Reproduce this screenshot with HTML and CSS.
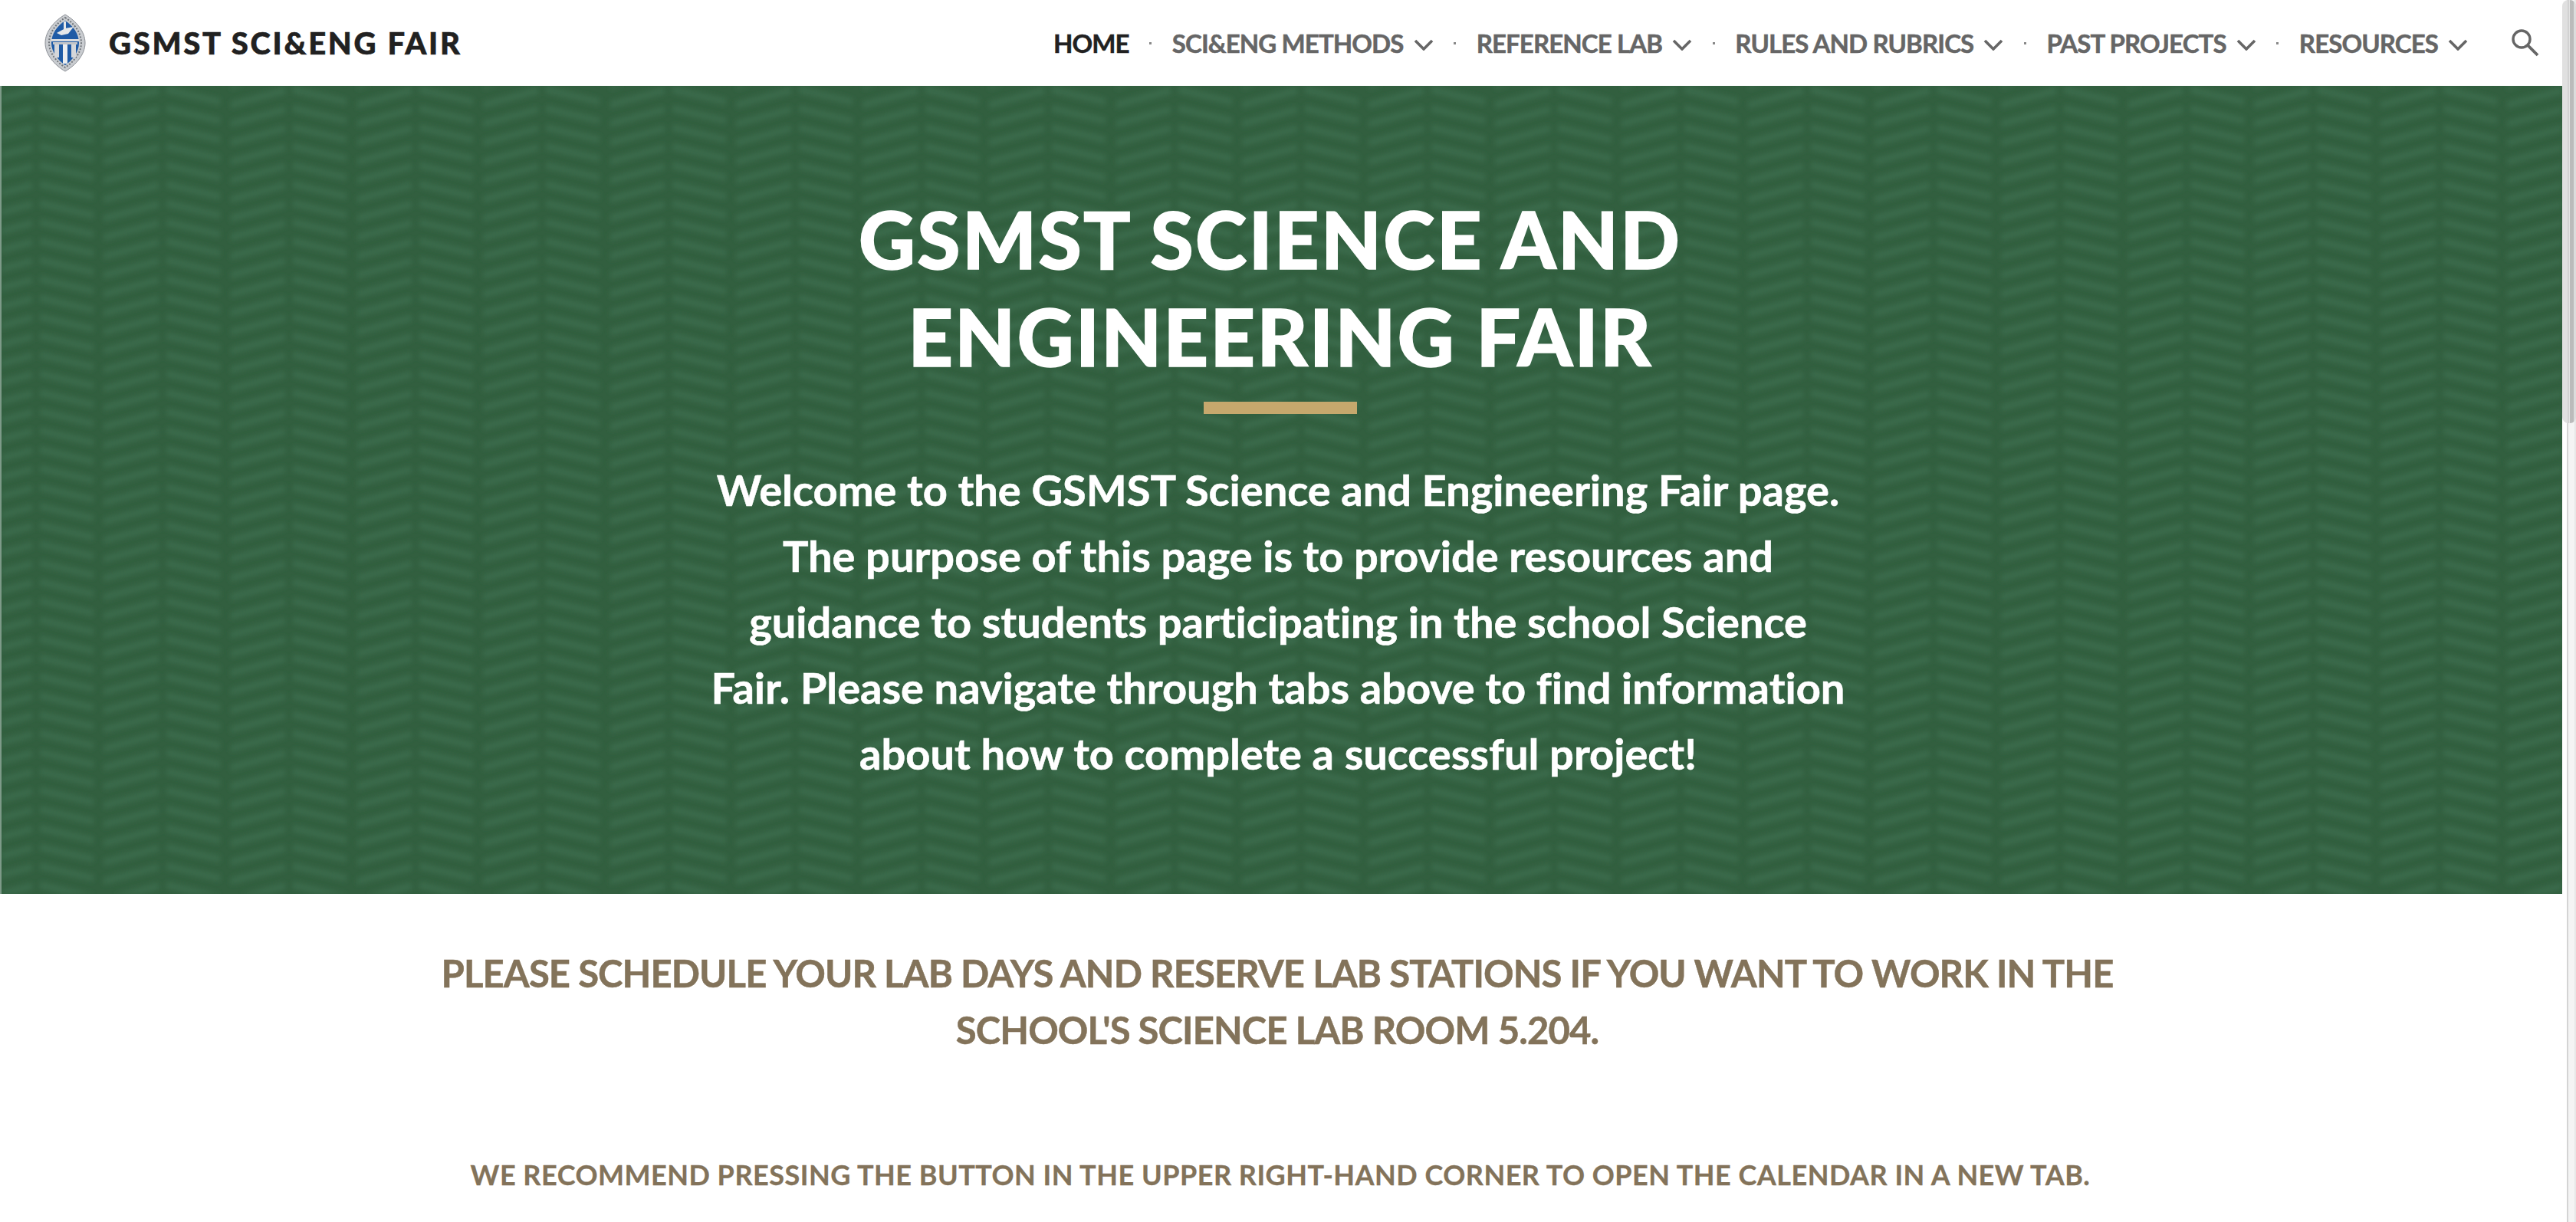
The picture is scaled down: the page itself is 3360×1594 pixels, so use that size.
FILE: index.html
```html
<!DOCTYPE html>
<html>
<head>
    <meta charset="UTF-8">
    <title>GSMST Sci&amp;Eng Fair</title>
    <link rel="stylesheet" href="styles.css">
</head>
<body>
    <div class="page">
        <div class="main">
            <!-- top bar -->
            <div class="topbar">
                <div class="brand">
                    <svg class="seal" width="54" height="76" viewBox="0 0 54 76">
                        <path d="M27 1C41 9 53 23 53 38C53 53 41 67 27 75C13 67 1 53 1 38C1 23 13 9 27 1Z" fill="#c9ccd0" stroke="#8b8f95" stroke-width="1"/>
                        <path d="M27 5C38 12 48 24 48 38C48 51 38 63 27 70C16 63 6 51 6 38C6 24 16 12 27 5Z" fill="none" stroke="#6f7479" stroke-width="2" stroke-dasharray="2 2"/>
                        <path d="M27 9C37 15 45 26 45 38C45 50 36 61 27 67C18 61 9 50 9 38C9 26 17 15 27 9Z" fill="#1f5ba6"/>
                        <rect x="9" y="33" width="36" height="3" fill="#d9dbde"/>
                        <path d="M16 25L27 19L38 17L31 26L22 28Z" fill="#e6e8ea"/>
                        <rect x="25" y="10" width="3" height="10" fill="#e6e8ea"/>
                        <rect x="13" y="39" width="6" height="18" fill="#d5d7da"/>
                        <rect x="24" y="39" width="6" height="26" fill="#eceef0"/>
                        <rect x="35" y="39" width="6" height="18" fill="#d5d7da"/>
                        <rect x="11" y="37" width="32" height="3" fill="#c2c5c9"/>
                    </svg>
                    <span class="site-name">GSMST SCI&amp;ENG FAIR</span>
                </div>
                <div class="nav">
                    <span class="nav-item active">HOME</span>
                    <span class="nav-dot"></span>
                    <span class="nav-item">SCI&amp;ENG METHODS<svg class="chev" width="26" height="16" viewBox="0 0 26 16"><path d="M2 3L13 14L24 3" fill="none" stroke="#666" stroke-width="3.6"/></svg></span>
                    <span class="nav-dot"></span>
                    <span class="nav-item">REFERENCE LAB<svg class="chev" width="26" height="16" viewBox="0 0 26 16"><path d="M2 3L13 14L24 3" fill="none" stroke="#666" stroke-width="3.6"/></svg></span>
                    <span class="nav-dot"></span>
                    <span class="nav-item">RULES AND RUBRICS<svg class="chev" width="26" height="16" viewBox="0 0 26 16"><path d="M2 3L13 14L24 3" fill="none" stroke="#666" stroke-width="3.6"/></svg></span>
                    <span class="nav-dot"></span>
                    <span class="nav-item">PAST PROJECTS<svg class="chev" width="26" height="16" viewBox="0 0 26 16"><path d="M2 3L13 14L24 3" fill="none" stroke="#666" stroke-width="3.6"/></svg></span>
                    <span class="nav-dot"></span>
                    <span class="nav-item">RESOURCES<svg class="chev" width="26" height="16" viewBox="0 0 26 16"><path d="M2 3L13 14L24 3" fill="none" stroke="#666" stroke-width="3.6"/></svg></span>
                    <svg class="search" width="38" height="38" viewBox="0 0 38 38">
                        <circle cx="14" cy="14" r="11" fill="none" stroke="#666" stroke-width="3.4"/>
                        <path d="M22 22L35 35" stroke="#666" stroke-width="3.8"/>
                    </svg>
                </div>
            </div>

            <!-- green banner -->
            <div class="hero">
                <svg class="hero-bg" width="100%" height="100%">
                    <defs>
                        <pattern id="chevrons" width="165" height="24.7" patternUnits="userSpaceOnUse" patternTransform="translate(133 0)">
                            <path d="M0 25L72 6M82 5L152 21M0 0.3L72 -18.7M82 -19.7L152 -3.7M0 49.7L72 30.7M82 29.7L152 45.7" stroke="#3a6a4b" stroke-width="9" fill="none"/>
                        </pattern>
                        <filter id="soft"><feGaussianBlur stdDeviation="3.4"/></filter>
                    </defs>
                    <rect width="100%" height="100%" fill="url(#chevrons)" filter="url(#soft)"/>
                </svg>
                <div class="hero-inner">
                    <h1 class="hero-title">GSMST SCIENCE AND&nbsp;<br>ENGINEERING FAIR</h1>
                    <div class="hero-rule"></div>
                    <p class="hero-text">Welcome to the GSMST Science and Engineering Fair page.<br>The purpose of this page is to provide resources and<br>guidance to students participating in the school Science<br>Fair. Please navigate through tabs above to find information<br>about how to complete a successful project!</p>
                </div>
            </div>

            <!-- notes under banner -->
            <div class="notes">
                <h2 class="note-big">PLEASE SCHEDULE YOUR LAB DAYS AND RESERVE LAB STATIONS IF YOU WANT TO WORK IN THE<br>SCHOOL'S SCIENCE LAB ROOM 5.204.</h2>
                <h3 class="note-small">WE RECOMMEND PRESSING THE BUTTON IN THE UPPER RIGHT-HAND CORNER TO OPEN THE CALENDAR IN A NEW TAB.</h3>
            </div>
        </div>
        <div class="scrollbar">
            <div class="scroll-track"></div>
            <div class="scroll-thumb"></div>
        </div>
    </div>
</body>
</html>
```

FILE: styles.css
```css
html, body {
    margin: 0;
    height: 100%;
    overflow: hidden;
    background-color: #fff;
}
.page {
    display: flex;
    height: 100%;
    font-family: Lato, "Liberation Sans", sans-serif;
    font-variant-ligatures: none;
}
.main {
    flex: 1;
    min-width: 0;
}

/* the page's own scrollbar is part of the picture */
.scrollbar {
    position: relative;
    width: 18px;
    display: flex;
    justify-content: flex-end;
}
.scroll-track {
    width: 12px;
    box-sizing: border-box;
    background-color: #f4f4f4;
    border-left: 2px solid #d4d4d4;
    border-right: 2px solid #e8e8e8;
}
.scroll-thumb {
    position: absolute;
    top: 0;
    left: 0;
    width: 18px;
    height: 552px;
    border-radius: 8px;
    background: linear-gradient(to right, #e0e0e0 0 7px, #d2d2d2 7px 9px, #e4e4e4 9px 10px, #bbb 10px 15px, #dcdcdc 15px 18px);
}

.topbar {
    height: 112px;
    display: flex;
    align-items: center;
    justify-content: space-between;
    padding: 0 29px 0 58px;
}
.brand {
    display: flex;
    align-items: center;
}
.seal {
    margin-right: 30px;
}
.site-name {
    font-size: 40px;
    font-weight: 900;
    letter-spacing: 2.7px;
    color: #212121;
    -webkit-text-stroke: 0.6px #212121;
}
.nav {
    display: flex;
    align-items: center;
}
.nav-item {
    display: flex;
    align-items: center;
    font-size: 33px;
    font-weight: 700;
    letter-spacing: -0.9px;
    color: #666;
    -webkit-text-stroke: 0.5px #666;
}
.nav-item.active {
    color: #212121;
    -webkit-text-stroke: 0.5px #212121;
}
.chev {
    margin-left: 13px;
    margin-top: 4px;
}
.nav-dot {
    width: 3px;
    height: 3px;
    margin: 0 26.6px;
    background-color: #888;
}
.search {
    margin-left: 56px;
}

.hero {
    position: relative;
    height: 1054px;
    border-left: 2px solid #7d9a88;
    background-color: #325f3f;
    color: #fff;
    text-align: center;
}
.hero-bg {
    position: absolute;
    top: 0;
    left: 0;
}
.hero-inner {
    position: relative;
    padding-top: 136px;
    display: flex;
    flex-direction: column;
    align-items: center;
    margin-right: 4px;
}
.hero-title {
    margin: 0;
    font-size: 102px;
    line-height: 127px;
    font-weight: 900;
    letter-spacing: 2.4px;
    -webkit-text-stroke: 1.5px #fff;
}
.hero-rule {
    width: 200px;
    height: 16px;
    margin-top: 22px;
    background-color: #c6a86d;
}
.hero-text {
    margin: 56px 6px 0 0;
    font-size: 56px;
    line-height: 86px;
    font-weight: 700;
    -webkit-text-stroke: 0.6px #fff;
}

.notes {
    text-align: center;
    color: #83735a;
    padding-right: 10px;
}
.note-big {
    margin: 66px 0 0;
    font-size: 49px;
    line-height: 74px;
    font-weight: 700;
    letter-spacing: -0.9px;
    -webkit-text-stroke: 0.5px #83735a;
}
.note-small {
    margin: 125px 0 0;
    padding-left: 8px;
    font-size: 36px;
    line-height: 54px;
    font-weight: 700;
    letter-spacing: 0.5px;
    -webkit-text-stroke: 0.3px #83735a;
}
```
